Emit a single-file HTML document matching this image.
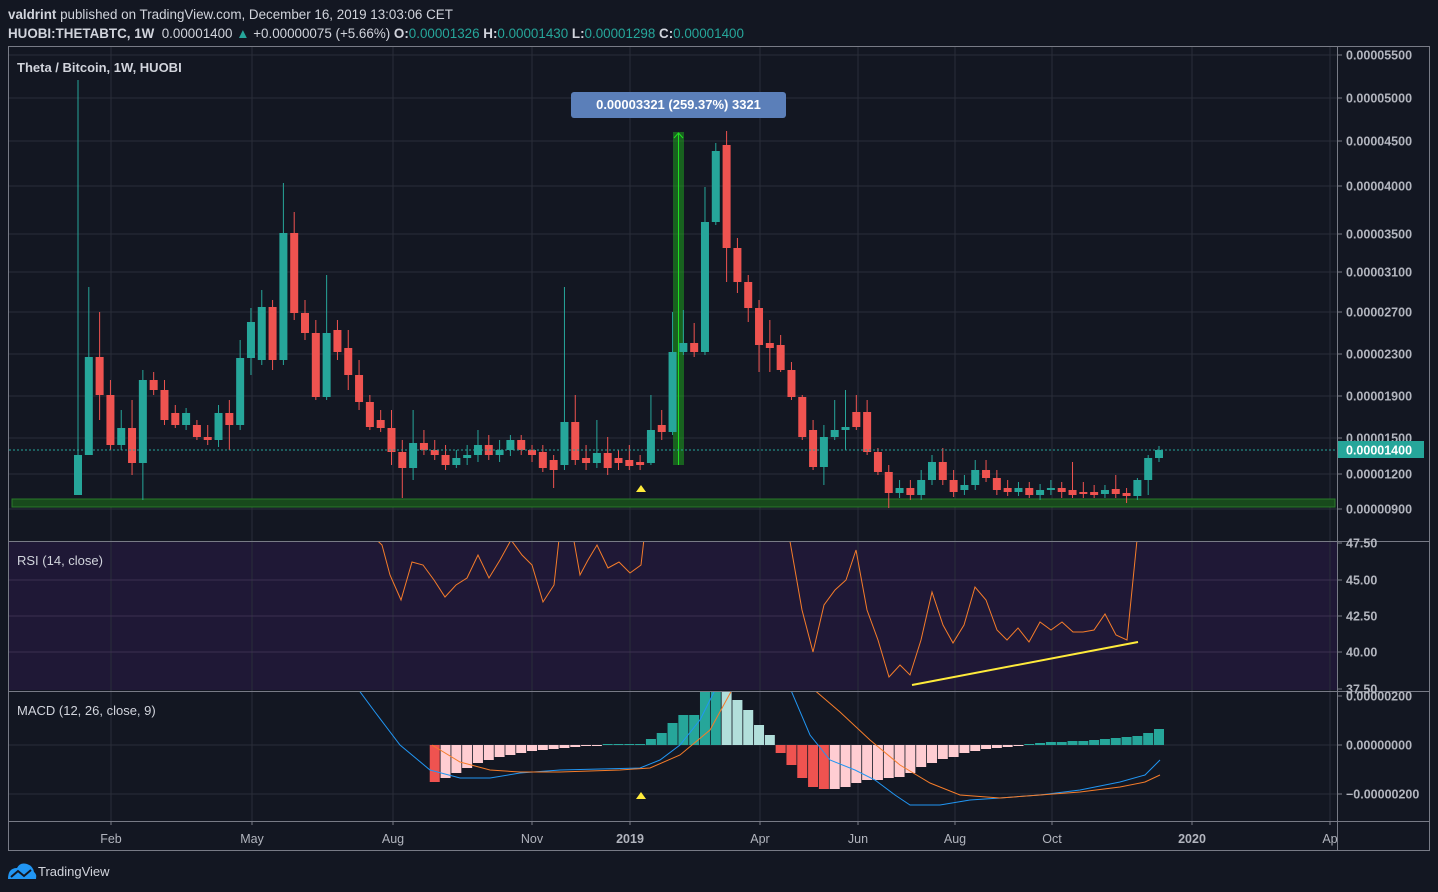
<!DOCTYPE html>
<html><head><meta charset="utf-8"><style>
html,body{margin:0;padding:0;background:#131722;width:1438px;height:892px;overflow:hidden;font-family:"Liberation Sans",sans-serif;}
.h{position:absolute;left:8px;color:#d1d4dc;font-size:13.4px;white-space:nowrap}
svg{position:absolute;left:0;top:0}
</style></head><body>
<div class="h" style="top:7px"><b>valdrint</b> published on TradingView.com, December 16, 2019 13:03:06 CET</div>
<div class="h" style="top:26px"><b>HUOBI:THETABTC, 1W</b>&nbsp; 0.00001400 <span style="color:#26a69a">▲</span> +0.00000075 (+5.66%) <b>O:</b><span style="color:#26a69a">0.00001326</span> <b>H:</b><span style="color:#26a69a">0.00001430</span> <b>L:</b><span style="color:#26a69a">0.00001298</span> <b>C:</b><span style="color:#26a69a">0.00001400</span></div>
<svg id="s" width="1438" height="892" xmlns="http://www.w3.org/2000/svg" font-family="Liberation Sans, sans-serif"></svg>
<script>
var S=document.getElementById('s'),o='';
function r(x,y,w,h,f,extra){o+='<rect x="'+x+'" y="'+y+'" width="'+w+'" height="'+h+'" fill="'+f+'" '+(extra||'')+'/>';}
function l(x1,y1,x2,y2,c,w,extra){o+='<line x1="'+x1+'" y1="'+y1+'" x2="'+x2+'" y2="'+y2+'" stroke="'+c+'" stroke-width="'+(w||1)+'" '+(extra||'')+'/>';}
function t(x,y,s,c,sz,a,wt){o+='<text x="'+x+'" y="'+y+'" fill="'+c+'" font-size="'+sz+'" text-anchor="'+(a||'start')+'" font-weight="'+(wt||'normal')+'">'+s+'</text>';}
function pl(p,c,w,clip){o+='<polyline points="'+p+'" fill="none" stroke="'+c+'" stroke-width="'+(w||1)+'" '+(clip?'clip-path="url(#'+clip+')"':'')+'/>';}
o+='<defs><clipPath id="cr"><rect x="9" y="542" width="1328" height="148"/></clipPath><clipPath id="cm"><rect x="9" y="692" width="1328" height="128"/></clipPath></defs>';
r(9,542,1328,148,'#1f1836');
var gx=[111,252,393,532,630,760,858,955,1052,1192,1330];
gx.forEach(function(x){l(x,46,x,821,'#2a2e39');});
[55,98,141,186,234,272,312,354,396,438,474,509].forEach(function(y){l(9,y,1337,y,'#2a2e39');});
[580,616,652].forEach(function(y){l(9,y,1337,y,'#3b3050');});
[745,794].forEach(function(y){l(9,y,1337,y,'#2a2e39');});
r(12,499,1323,8,'#184a1c','stroke="#2a7a2a" stroke-width="1"');
r(673,132,11,333,'rgba(30,160,30,0.55)');
l(678.5,133,678.5,465,'#22dd22',1);
pl('674,138 678.5,133 683,138','#22dd22',1);
var C=[[495,455,80,495],[455,357,287,455],[357,395,312,420],[395,445,380,450],[445,428,410,450],[428,463,400,475],[463,380,370,500],[380,390,372,395],[390,420,380,425],[413,425,405,428],[425,413,408,430],[425,437,420,440],[437,440,425,445],[440,413,405,447],[413,425,400,450],[425,358,340,430],[358,322,308,375],[360,307,290,365],[307,360,300,370],[360,233,183,365],[233,313,212,320],[313,333,300,340],[333,397,320,400],[397,333,275,400],[330,352,320,360],[348,375,330,390],[375,402,360,410],[402,427,395,430],[420,428,410,432],[428,452,410,465],[452,468,440,498],[468,443,410,480],[443,450,430,455],[450,455,440,460],[455,465,445,470],[465,458,450,468],[458,455,445,465],[455,445,430,462],[445,455,435,460],[455,450,440,462],[450,440,435,456],[440,450,435,455],[450,455,445,462],[452,468,445,472],[460,470,455,488],[465,422,287,470],[422,460,395,465],[458,463,445,470],[463,453,420,468],[453,468,437,475],[458,463,450,470],[460,466,445,470],[462,465,455,470],[463,430,395,465],[425,432,410,440],[432,352,312,435],[352,343,310,355],[343,352,323,357],[352,222,187,355],[222,151,143,225],[145,248,131,282],[248,282,238,293],[282,308,275,322],[308,345,300,372],[343,348,320,372],[345,370,335,372],[370,397,362,400],[397,437,395,440],[430,467,420,470],[467,437,425,485],[437,430,400,440],[430,427,390,450],[412,427,395,430],[412,452,400,455],[452,472,448,475],[472,493,465,508],[493,488,480,498],[488,495,480,500],[495,480,470,500],[480,462,455,485],[462,480,448,485],[480,492,470,497],[490,485,475,495],[485,470,460,490],[470,478,460,482],[478,490,470,495],[488,492,480,496],[492,488,482,496],[488,495,482,498],[495,490,484,500],[490,488,480,495],[488,492,482,498],[490,495,462,498],[492,494,482,498],[492,495,485,498],[494,490,485,498],[489,494,475,498],[493,496,488,503],[496,480,478,500],[480,458,455,495],[458,450,446,462]];
C.forEach(function(c,i){var x=78+i*10.81,g=c[1]<c[0],col=g?'#26a69a':'#ef5350';var tp=Math.min(c[0],c[1]),h=Math.max(Math.abs(c[1]-c[0]),2);l(x,c[2],x,c[3],col,1);r(x-4,tp,8,h,col);});
l(9,450,1337,450,'#26a69a',1,'stroke-dasharray="2,2"');
o+='<polygon points="636,492 641,485 646,492" fill="#ffeb3b"/><polygon points="636,799 641,792 646,799" fill="#ffeb3b"/>';
r(571,92,215,26,'#5b7fb9','rx="3"');t(678.5,109,'0.00003321 (259.37%) 3321','#fff',13,'middle','bold');
pl('366,530 382,545 390,575 401,600 412,562 423,565 434,580 445,597 456,585 467,578 478,555 489,578 500,560 511,540 522,555 532,565 543,602 554,585 560,530','#f57c2a',1,'cr');
pl('572,530 580,575 588,560 597,545 608,568 619,562 630,573 641,565 645,530','#f57c2a',1,'cr');
pl('788,530 802,610 813,652 824,605 835,590 846,580 856,550 867,610 878,640 889,677 900,665 910,675 921,640 932,592 943,625 953,643 964,625 975,587 986,600 997,630 1007,640 1018,628 1029,642 1040,622 1051,630 1062,622 1073,632 1083,632 1094,630 1105,614 1116,635 1127,640 1138,530','#f57c2a',1,'cr');
l(912,685,1138,642,'#ffeb3b',2);
var H=[-37,-33,-28,-23,-37,-33,-28,-23,-18,-15,-12,-10,-8,-6,-5,-4,-3,-2,-1,-1,1,1,1,1,6,12,22,30,30,55,62,58,45,35,20,10,-8,-20,-33,-42,-44,-44,-42,-38,-35,-35,-33,-32,-28,-22,-18,-14,-12,-8,-6,-4,-3,-2,-1,0,2,3,3,4,4,5,6,7,8,9,12,16];
var prev=0;H.forEach(function(v,k){var i=29+k;if(i<33){return;}var x=78+i*10.81;var col;if(v>=0)col=v>=prev?'#26a69a':'#b2dfdb';else col=v<prev?'#ef5350':'#ffcdd2';prev=v;var h=Math.max(Math.abs(v),1);o+='<rect x="'+(x-5)+'" y="'+(v>=0?745-h:745)+'" width="10" height="'+h+'" fill="'+col+'" clip-path="url(#cm)"/>';});
pl('355,685 375,712 400,745 430,770 460,778 490,778 520,773 560,770 600,769 640,768 660,760 680,745 700,720 715,690','#2196f3',1,'cm');
pl('790,688 810,735 830,760 855,770 875,780 895,795 910,805 940,805 970,800 1000,798 1040,795 1080,790 1120,782 1145,775 1160,760','#2196f3',1,'cm');
pl('432,745 460,762 490,770 520,772 560,772 620,770 650,768 680,755 710,730 733,688','#f57c2a',1,'cm');
pl('812,688 840,712 870,740 900,765 930,783 960,795 1000,798 1040,795 1080,792 1120,787 1145,782 1160,775','#f57c2a',1,'cm');
o+='<rect x="8.5" y="46.5" width="1421" height="804" fill="none" stroke="#787b86"/>';
l(1337.5,46,1337.5,851,'#787b86');
[541.5,691.5,821.5].forEach(function(y){l(8,y,1430,y,'#787b86');});
var P=[[55,'0.00005500'],[98,'0.00005000'],[141,'0.00004500'],[186,'0.00004000'],[234,'0.00003500'],[272,'0.00003100'],[312,'0.00002700'],[354,'0.00002300'],[396,'0.00001900'],[438,'0.00001500'],[474,'0.00001200'],[509,'0.00000900'],[543,'47.50'],[580,'45.00'],[616,'42.50'],[652,'40.00'],[689,'37.50'],[696,'0.00000200'],[745,'0.00000000'],[794,'\u22120.00000200']];
P.forEach(function(p){l(1338,p[0],1342,p[0],'#787b86');t(1346,p[0]+4.5,p[1],'#b2b5be',12.5,'start','bold');});
r(1338,441,86,17,'#26a69a');t(1346,454.5,'0.00001400','#fff',12.5,'start','bold');
var T=[[111,'Feb'],[252,'May'],[393,'Aug'],[532,'Nov'],[630,'2019'],[760,'Apr'],[858,'Jun'],[955,'Aug'],[1052,'Oct'],[1192,'2020'],[1330,'Ap']];
T.forEach(function(p){l(p[0],821,p[0],825,'#787b86');t(p[0],843,p[1],'#b2b5be',12.5,'middle',(p[1]=='2019'||p[1]=='2020')?'bold':'normal');});
t(17,72,'Theta / Bitcoin, 1W, HUOBI','#d1d4dc',13,'start','bold');
t(17,565,'RSI (14, close)','#d1d4dc',13);
t(17,715,'MACD (12, 26, close, 9)','#d1d4dc',13);
o+='<path d="M8 879 Q8 868 17 868 Q20 862 27 864 Q33 866 34 872 Q37 874 36 879 Z" fill="#2196f3"/><polyline points="11,877 18,871 24,876 31,870" fill="none" stroke="#131722" stroke-width="2"/>';
t(38,876,'TradingView','#d1d4dc',13);
S.innerHTML=o;
</script>
</body></html>
